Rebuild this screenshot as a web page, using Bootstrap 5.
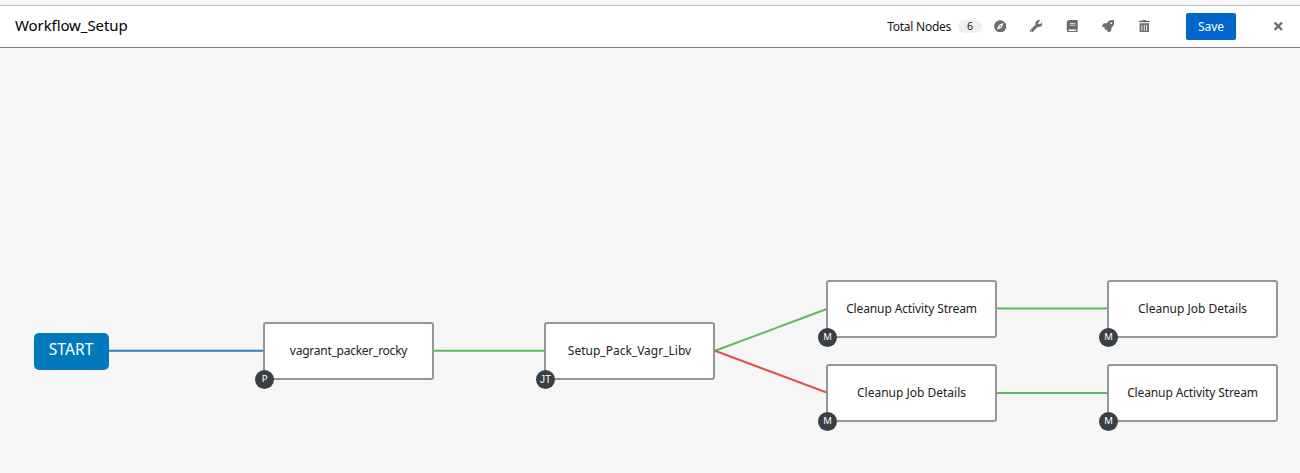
<!DOCTYPE html>
<html lang="en">
<head>
<meta charset="utf-8">
<title>Workflow_Setup</title>
<link href="https://cdn.jsdelivr.net/npm/bootstrap@5.3.0/dist/css/bootstrap.min.css" rel="stylesheet">
<style>
body{font-family:"Noto Sans","Open Sans",sans-serif;background:#f6f6f6;color:#151515;height:473px;overflow:hidden}
.top-strip{height:6px;border-bottom:1px solid #bdbdbd;padding-left:107px}
.top-strip div{width:834px;height:1px;background:#fff;border-radius:0 0 8px 8px}
.toolbar-row{height:42px;background:#fff;border-bottom:1px solid #818184;padding:0 4px 0 15px}
.wf-title{font-size:15px;font-weight:400;line-height:24px;color:#000;margin-top:-4px;letter-spacing:-.09px}
.total{font-size:12px;letter-spacing:-.26px;padding-right:1px}
.count{width:24px;height:13px;border-radius:7px;background:#f0f0f0;font-size:10.5px;line-height:12px;font-weight:400;color:#151515;padding:0;margin:0 0 1px 6px}
.tool{width:36px;height:28px;color:#6a6e73;margin-top:-1px}
.tool svg{height:12.5px;width:12.5px;fill:currentColor}
.save{width:50px;height:27px;background:#06c;color:#fff;border-radius:2px;font-size:12px;line-height:27px;margin:0 24px 0 24px}
.canvas{height:425px}
.canvas>svg{display:block}
.wf-node{position:absolute;width:171px;height:58px;background:#fff;border:2px solid #93969a;border-radius:3px;font-size:12px;color:#222;white-space:nowrap}
.wf-node span{margin-top:-1px}
.wf-node .tight{letter-spacing:-.25px}
.wf-node .snug{letter-spacing:-.12px}
.wf-node i{position:absolute;left:-10px;bottom:-11px;width:19px;height:19px;border-radius:50%;background:#393f44;color:#fff;font-style:normal;font-size:9.5px;line-height:18px;text-align:center}
.wf-node .jt{font-family:"Liberation Sans",sans-serif;font-size:10px;line-height:19px}
.start{position:absolute;left:34px;top:285px;width:75px;height:37px;background:#0279bc;border-radius:5px;color:#fff;font-size:15.5px;letter-spacing:.1px}
.start span{margin-top:-3px;margin-right:1px}
</style>
</head>
<body>
<div class="top-strip"><div></div></div>
<header class="toolbar-row d-flex align-items-center">
<h1 class="wf-title mb-0 me-auto">Workflow_Setup</h1>
<span class="total">Total Nodes</span>
<span class="badge count">6</span>
<button class="btn tool p-0 border-0 d-flex align-items-center justify-content-center" aria-label="Legend"><svg viewBox="0 0 496 512"><path d="M225.38 233.37c-12.5 12.5-12.5 32.76 0 45.25 12.49 12.5 32.76 12.5 45.25 0 12.5-12.5 12.5-32.76 0-45.25-12.5-12.49-32.76-12.49-45.25 0zM248 8C111.03 8 0 119.03 0 256s111.03 248 248 248 248-111.03 248-248S384.97 8 248 8zm126.14 148.05L308.17 300.4a31.938 31.938 0 0 1-15.77 15.77l-144.34 65.97c-16.65 7.61-33.81-9.55-26.2-26.2l65.98-144.35a31.938 31.938 0 0 1 15.77-15.77l144.34-65.97c16.65-7.6 33.8 9.55 26.19 26.2z"/></svg></button>
<button class="btn tool p-0 border-0 d-flex align-items-center justify-content-center" aria-label="Tools"><svg viewBox="0 0 512 512"><path d="M507.73 109.1c-2.24-9.03-13.54-12.09-20.12-5.51l-74.36 74.36-67.88-11.31-11.31-67.88 74.36-74.36c6.62-6.62 3.43-17.9-5.66-20.16-47.38-11.74-99.55.91-136.58 37.93-39.64 39.64-50.55 97.1-34.05 147.2L18.74 402.76c-24.99 24.99-24.99 65.51 0 90.5 24.99 24.99 65.51 24.99 90.5 0l213.21-213.21c50.12 16.71 107.47 5.68 147.37-34.22 37.07-37.07 49.7-89.32 37.91-136.73zM64 472c-13.25 0-24-10.75-24-24 0-13.26 10.75-24 24-24s24 10.74 24 24c0 13.25-10.75 24-24 24z"/></svg></button>
<button class="btn tool p-0 border-0 d-flex align-items-center justify-content-center" aria-label="Documentation"><svg viewBox="0 0 448 512"><path d="M448 360V24c0-13.3-10.7-24-24-24H96C43 0 0 43 0 96v320c0 53 43 96 96 96h328c13.3 0 24-10.7 24-24v-16c0-7.5-3.5-14.3-8.9-18.7-4.2-15.4-4.2-59.3 0-74.7 5.4-4.3 8.9-11.1 8.9-18.6zM128 134c0-3.3 2.7-6 6-6h212c3.3 0 6 2.7 6 6v20c0 3.3-2.7 6-6 6H134c-3.3 0-6-2.7-6-6v-20zm0 64c0-3.3 2.7-6 6-6h212c3.3 0 6 2.7 6 6v20c0 3.3-2.7 6-6 6H134c-3.3 0-6-2.7-6-6v-20zm253.4 250H96c-17.7 0-32-14.3-32-32 0-17.6 14.4-32 32-32h285.4c-1.9 17.1-1.9 46.9 0 64z"/></svg></button>
<button class="btn tool p-0 border-0 d-flex align-items-center justify-content-center" aria-label="Launch"><svg viewBox="0 0 512 512"><path d="M505.12019,19.09375c-1.18945-5.53125-6.65819-11-12.207-12.1875C460.716,0,435.507,0,410.40747,0,307.17523,0,245.26909,55.20312,199.05238,128H94.83772c-16.34763.01562-35.55658,11.875-42.88664,26.48438L2.51562,253.29688A28.4,28.4,0,0,0,0,264a24.00867,24.00867,0,0,0,24.00582,24H127.81618l-22.47457,22.46875c-11.36521,11.36133-12.99607,32.25781,0,45.25L156.24582,406.625c11.15623,11.1875,32.15619,13.15625,45.27726,0l22.47457-22.46875V488a24.00867,24.00867,0,0,0,24.00581,24,28.55934,28.55934,0,0,0,10.707-2.51562l98.72834-49.39063c14.62888-7.29687,26.50776-26.5,26.50776-42.85937V312.79688c72.59753-46.3125,128.03493-108.40626,128.03493-211.09376C512.07526,76.5,512.07526,51.29688,505.12019,19.09375ZM384.04033,168A40,40,0,1,1,424.05,128,40.02322,40.02322,0,0,1,384.04033,168Z"/></svg></button>
<button class="btn tool p-0 border-0 d-flex align-items-center justify-content-center" aria-label="Delete all nodes"><svg viewBox="0 0 448 512"><path d="M32 464a48 48 0 0 0 48 48h288a48 48 0 0 0 48-48V128H32zm272-256a16 16 0 0 1 32 0v224a16 16 0 0 1-32 0zm-96 0a16 16 0 0 1 32 0v224a16 16 0 0 1-32 0zm-96 0a16 16 0 0 1 32 0v224a16 16 0 0 1-32 0zM432 32H312l-9.4-18.7A24 24 0 0 0 288.1 0H159.8a23.72 23.72 0 0 0-21.4 13.3L129 32H16A16 16 0 0 0 0 48v32a16 16 0 0 0 16 16h416a16 16 0 0 0 16-16V48a16 16 0 0 0-16-16z"/></svg></button>
<button class="btn save p-0 border-0">Save</button>
<button class="btn tool p-0 border-0 d-flex align-items-center justify-content-center" aria-label="Close"><svg viewBox="0 0 352 512"><path d="M242.72 256l100.07-100.07c12.28-12.28 12.28-32.19 0-44.48l-22.24-22.24c-12.28-12.28-32.19-12.28-44.48 0L176 189.28 75.93 89.21c-12.28-12.28-32.19-12.28-44.48 0L9.21 111.45c-12.28 12.28-12.28 32.19 0 44.48L109.28 256 9.21 356.07c-12.28 12.28-12.28 32.19 0 44.48l22.24 22.24c12.28 12.28 32.2 12.28 44.48 0L176 322.72l100.07 100.07c12.28 12.28 32.2 12.28 44.48 0l22.24-22.24c12.28-12.28 12.28-32.19 0-44.48L242.72 256z"/></svg></button>
</header>
<main class="canvas position-relative">
<svg width="1300" height="425" fill="none" stroke-width="2">
<path stroke="#337ab7" d="M108 302.8H265"/>
<g stroke="#5cb85c"><path d="M433 302.8H546M715 302.8L828 260.5M996 260.5H1108M996 345H1108"/></g>
<path stroke="#d9534f" d="M715 302.8L828 345"/>
</svg>
<div class="start d-flex align-items-center justify-content-center"><span>START</span></div>
<div class="wf-node d-flex align-items-center justify-content-center" style="left:263px;top:274px"><span class="tight">vagrant_packer_rocky</span><i>P</i></div>
<div class="wf-node d-flex align-items-center justify-content-center" style="left:544px;top:274px"><span>Setup_Pack_Vagr_Libv</span><i class="jt">JT</i></div>
<div class="wf-node d-flex align-items-center justify-content-center" style="left:826px;top:232px"><span class="snug">Cleanup Activity Stream</span><i>M</i></div>
<div class="wf-node d-flex align-items-center justify-content-center" style="left:826px;top:316px"><span>Cleanup Job Details</span><i>M</i></div>
<div class="wf-node d-flex align-items-center justify-content-center" style="left:1107px;top:232px"><span>Cleanup Job Details</span><i>M</i></div>
<div class="wf-node d-flex align-items-center justify-content-center" style="left:1107px;top:316px"><span class="snug">Cleanup Activity Stream</span><i>M</i></div>
</main>
<script src="https://cdn.jsdelivr.net/npm/bootstrap@5.3.0/dist/js/bootstrap.bundle.min.js"></script>
</body>
</html>
